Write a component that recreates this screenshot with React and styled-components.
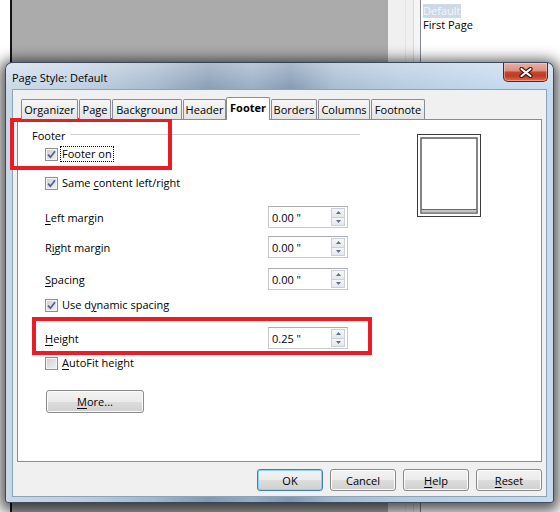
import React from 'react';
import styled, { createGlobalStyle } from 'styled-components';

const GlobalStyle = createGlobalStyle`
  html, body {
    margin: 0;
    padding: 0;
    overflow: hidden;
    background: #fff;
  }
`;

// Backdrop: the window behind the dialog
const Screen = styled.div`
  position: relative;
  display: flex;
  width: 560px;
  height: 512px;
  overflow: hidden;
  font-family: "Open Sans", "Noto Sans", sans-serif;
  font-size: 11px;
  color: #000;
`;

const Margin = styled.div`
  flex: none;
  width: 10px;
  background: #fff;
`;

const EdgeLine = styled.div`
  flex: none;
  width: 2px;
  background: #141414;
`;

const Canvas = styled.div`
  flex: none;
  width: 376px;
  background: #ababab;
`;

const Ruler = styled.div`
  flex: none;
  width: 32px;
  background: linear-gradient(
    90deg,
    #f0f0f0 0 17px,
    #e3e3e3 17px 18px,
    #f0f0f0 18px 25px,
    #d8d8d8 25px 26px,
    #f5f5f5 26px
  );
`;

const StyleList = styled.div`
  flex: 1;
  display: flex;
  flex-direction: column;
  align-items: flex-start;
  padding: 4px 2px 0;
  border-left: 1px solid #828790;
  background: #fff;
`;

const StyleItem = styled.div`
  line-height: 14px;
  padding: 0 1px 0 0;
  background: ${(p) => (p.$selected ? '#cdd9e6' : 'transparent')};
  color: ${(p) => (p.$selected ? '#f2f6fa' : '#000')};
`;

// Dialog window
const Dialog = styled.div`
  position: absolute;
  left: 5px;
  top: 62px;
  width: 549px;
  height: 441px;
  box-sizing: border-box;
  display: flex;
  flex-direction: column;
  border: 1px solid rgba(38, 48, 66, 0.85);
  border-radius: 7px 7px 3px 3px;
  background:
    linear-gradient(180deg, rgba(255, 255, 255, 0.35), rgba(255, 255, 255, 0) 30px),
    linear-gradient(
      90deg,
      #c9d8e7 0%,
      #bccde0 14%,
      #a2b6cc 27%,
      #8399b2 37%,
      #95abc3 45%,
      #7f96b0 52%,
      #a3b9d0 60%,
      #b3c9df 72%,
      #bdd3ea 86%,
      #c6dbf0 100%
    );
  box-shadow: 0 3px 14px 5px rgba(0, 0, 0, 0.66);
`;

const TitleBar = styled.div`
  flex: none;
  height: 27px;
  display: flex;
  justify-content: space-between;
  align-items: flex-start;
  padding: 0 5px 0 6px;
`;

const Title = styled.span`
  margin-top: 8px;
  line-height: 14px;
  color: #000;
`;

const CloseButton = styled.div`
  width: 45px;
  height: 19px;
  box-sizing: border-box;
  display: flex;
  align-items: center;
  justify-content: center;
  border: 1px solid #5e2219;
  border-top: none;
  border-radius: 0 0 5px 5px;
  background: linear-gradient(
    180deg,
    #eab0a2 0%,
    #de8f7d 44%,
    #c8452d 50%,
    #c13b24 72%,
    #d66c55 100%
  );
  box-shadow: inset 0 0 0 1px rgba(255, 220, 210, 0.45);
`;

const Frame = styled.div`
  flex: 1;
  display: flex;
  padding: 0 7px 6px;
`;

const Client = styled.div`
  flex: 1;
  display: flex;
  flex-direction: column;
  padding: 7px 4px 0;
  background: #f0f0f0;
  box-shadow: 0 0 0 1px #8ea2b8;
`;

const TabStrip = styled.div`
  position: relative;
  z-index: 1;
  flex: none;
  height: 22px;
  display: flex;
  align-items: flex-end;
  padding-left: 4px;
`;

const Tab = styled.div`
  flex: none;
  box-sizing: border-box;
  width: ${(p) => p.$w}px;
  height: ${(p) => (p.$active ? 23 : 20)}px;
  margin-left: ${(p) => p.$gap}px;
  margin-bottom: ${(p) => (p.$active ? -1 : 0)}px;
  display: flex;
  align-items: center;
  justify-content: center;
  border: 1px solid #898c95;
  border-bottom: none;
  border-radius: 2px 2px 0 0;
  background: ${(p) => (p.$active ? '#fff' : 'linear-gradient(180deg, #f6f6f6, #e4e4e4)')};
  font-weight: ${(p) => (p.$active ? 700 : 400)};
  padding-bottom: ${(p) => (p.$active ? 3 : 0)}px;
  white-space: nowrap;
`;

const Panel = styled.div`
  flex: none;
  height: 343px;
  box-sizing: border-box;
  display: flex;
  padding: 7px 0 0 14px;
  border: 1px solid #898c95;
  background: #fff;
`;

const Form = styled.div`
  flex: none;
  width: 328px;
  display: flex;
  flex-direction: column;
`;

const Heading = styled.div`
  height: 16px;
  display: flex;
  align-items: center;
`;

const Rule = styled.div`
  flex: 1;
  margin-left: 4px;
  margin-top: -1px;
  border-top: 1px solid #cfcfcf;
  border-bottom: 1px solid #fff;
`;

const CheckRow = styled.label`
  height: 16px;
  margin-top: ${(p) => p.$gap}px;
  padding-left: 13px;
  display: flex;
  align-items: center;
`;

const Box = styled.span`
  flex: none;
  width: 13px;
  height: 13px;
  box-sizing: border-box;
  display: flex;
  align-items: center;
  justify-content: center;
  border: 1px solid #8e8f8f;
  background: linear-gradient(135deg, #cfcfcf, #f2f2f2);
  box-shadow: inset 0 0 0 1px #f4f4f4;
`;

const Caption = styled.span`
  margin-left: 2px;
  padding: 0 1px;
  line-height: 14px;
  border: 1px dotted ${(p) => (p.$focus ? '#000' : 'transparent')};
  white-space: nowrap;
`;

const FieldRow = styled.div`
  height: 22px;
  margin-top: ${(p) => p.$gap}px;
  padding-left: 13px;
  display: flex;
  align-items: center;
`;

const FieldLabel = styled.span`
  flex: none;
  width: 223px;
  white-space: nowrap;
`;

const SpinField = styled.div`
  flex: none;
  width: 80px;
  height: 22px;
  box-sizing: border-box;
  display: flex;
  align-items: center;
  justify-content: space-between;
  padding: 0 2px 0 3px;
  border: 1px solid #c6c9cf;
  border-top-color: #abadb3;
  background: #fff;
`;

const SpinButtons = styled.div`
  width: 14px;
  height: 18px;
  display: flex;
  flex-direction: column;
`;

const SpinHalf = styled.div`
  flex: 1;
  box-sizing: border-box;
  display: flex;
  align-items: center;
  justify-content: center;
  border: 1px solid #cbd0d8;
  border-top-width: ${(p) => (p.$down ? 0 : 1)}px;
  background: linear-gradient(180deg, #f7f7f7, #e4e7ec);
`;

const Button = styled.div`
  flex: none;
  box-sizing: border-box;
  width: ${(p) => p.$w}px;
  height: ${(p) => p.$h}px;
  display: flex;
  align-items: center;
  justify-content: center;
  border: 1px solid ${(p) => (p.$default ? '#3c7fb1' : '#8a8a8a')};
  border-radius: 3px;
  background: linear-gradient(180deg, #f3f3f3 0%, #ebebeb 50%, #dddddd 51%, #d0d0d0 100%);
  box-shadow: inset 0 0 0 1px ${(p) => (p.$default ? '#8fd3f4' : '#fbfbfb')};
`;

const MoreRow = styled.div`
  margin-top: 19px;
  padding-left: 14px;
  display: flex;
`;

const ButtonRow = styled.div`
  flex: none;
  height: 22px;
  margin-top: 7px;
  display: flex;
  justify-content: flex-end;
  gap: 7px;
`;

const Preview = styled.svg`
  flex: none;
  margin: 7px 0 0 57px;
`;

const Callout = styled.div`
  position: absolute;
  left: ${(p) => p.$x}px;
  top: ${(p) => p.$y}px;
  width: ${(p) => p.$w}px;
  height: ${(p) => p.$h}px;
  box-sizing: border-box;
  border: 4px solid #ec1c24;
  pointer-events: none;
`;

const Key = styled.u`
  text-decoration: underline;
  text-underline-offset: 2px;
`;

const tabs = [
  { label: 'Organizer', w: 57, gap: 0 },
  { label: 'Page', w: 32, gap: 1 },
  { label: 'Background', w: 70, gap: 1 },
  { label: 'Header', w: 43, gap: 1 },
  { label: 'Footer', w: 44, gap: 0, active: true },
  { label: 'Borders', w: 46, gap: 1 },
  { label: 'Columns', w: 52, gap: 1 },
  { label: 'Footnote', w: 54, gap: 1 },
];

function Check({ checked, gap, focus, children }) {
  return (
    <CheckRow $gap={gap}>
      <Box>
        {checked && (
          <svg width="9" height="9" viewBox="0 0 9 9">
            <path d="M1 4.6 L3.4 7.2 L8 1.2" fill="none" stroke="#4b5f9e" strokeWidth="1.7" />
          </svg>
        )}
      </Box>
      <Caption $focus={focus}>{children}</Caption>
    </CheckRow>
  );
}

function Spin({ value }) {
  return (
    <SpinField>
      <span>{value}</span>
      <SpinButtons>
        <SpinHalf>
          <svg width="5" height="3" viewBox="0 0 5 3">
            <path d="M0 3 L2.5 0 L5 3 Z" fill="#5b6d8c" />
          </svg>
        </SpinHalf>
        <SpinHalf $down>
          <svg width="5" height="3" viewBox="0 0 5 3">
            <path d="M0 0 L2.5 3 L5 0 Z" fill="#5b6d8c" />
          </svg>
        </SpinHalf>
      </SpinButtons>
    </SpinField>
  );
}

function Field({ gap, label, value }) {
  return (
    <FieldRow $gap={gap}>
      <FieldLabel>{label}</FieldLabel>
      <Spin value={value} />
    </FieldRow>
  );
}

export default function App() {
  return (
    <Screen>
      <GlobalStyle />
      <Margin />
      <EdgeLine />
      <Canvas />
      <Ruler />
      <StyleList>
        <StyleItem $selected>Default</StyleItem>
        <StyleItem>First Page</StyleItem>
      </StyleList>

      <Dialog>
        <TitleBar>
          <Title>Page Style: Default</Title>
          <CloseButton>
            <svg width="14" height="11" viewBox="0 0 14 11">
              <path d="M2.5 2 L11.5 9 M11.5 2 L2.5 9" stroke="#3d120b" strokeWidth="4.2" strokeLinecap="round" />
              <path d="M2.5 2 L11.5 9 M11.5 2 L2.5 9" stroke="#fff" strokeWidth="2.2" strokeLinecap="round" />
            </svg>
          </CloseButton>
        </TitleBar>
        <Frame>
          <Client>
            <TabStrip>
              {tabs.map((t) => (
                <Tab key={t.label} $w={t.w} $gap={t.gap} $active={t.active}>
                  {t.label}
                </Tab>
              ))}
            </TabStrip>
            <Panel>
              <Form>
                <Heading>
                  Footer
                  <Rule />
                </Heading>
                <Check checked focus gap={3}>Footer on</Check>
                <Check checked gap={13}>Same <Key>c</Key>ontent left/right</Check>
                <Field gap={15} label={<><Key>L</Key>eft margin</>} value={'0.00 "'} />
                <Field gap={8} label={<>R<Key>i</Key>ght margin</>} value={'0.00 "'} />
                <Field gap={10} label={<><Key>S</Key>pacing</>} value={'0.00 "'} />
                <Check checked gap={7}>Use d<Key>y</Key>namic spacing</Check>
                <Field gap={14} label={<><Key>H</Key>eight</>} value={'0.25 "'} />
                <Check gap={6}><Key>A</Key>utoFit height</Check>
                <MoreRow>
                  <Button $w={98} $h={23}><span><Key>M</Key>ore...</span></Button>
                </MoreRow>
              </Form>
              <Preview width="64" height="83" viewBox="0 0 64 83">
                <rect x="0.5" y="0.5" width="63" height="82" fill="#fff" stroke="#3a3a3a" />
                <rect x="4" y="4" width="56" height="75" fill="#fff" stroke="#5e5e5e" strokeWidth="1.5" />
                <rect x="4.8" y="75.5" width="54.4" height="2.8" fill="#c4c4c4" />
                <line x1="4" y1="75.5" x2="60" y2="75.5" stroke="#6a6a6a" strokeWidth="1" />
              </Preview>
            </Panel>
            <ButtonRow>
              <Button $w={66} $h={22} $default>OK</Button>
              <Button $w={66} $h={22}>Cancel</Button>
              <Button $w={66} $h={22}><span><Key>H</Key>elp</span></Button>
              <Button $w={66} $h={22}><span><Key>R</Key>eset</span></Button>
            </ButtonRow>
          </Client>
        </Frame>
      </Dialog>

      <Callout $x={10} $y={118} $w={162} $h={52} />
      <Callout $x={32} $y={317} $w={340} $h={38} />
    </Screen>
  );
}
